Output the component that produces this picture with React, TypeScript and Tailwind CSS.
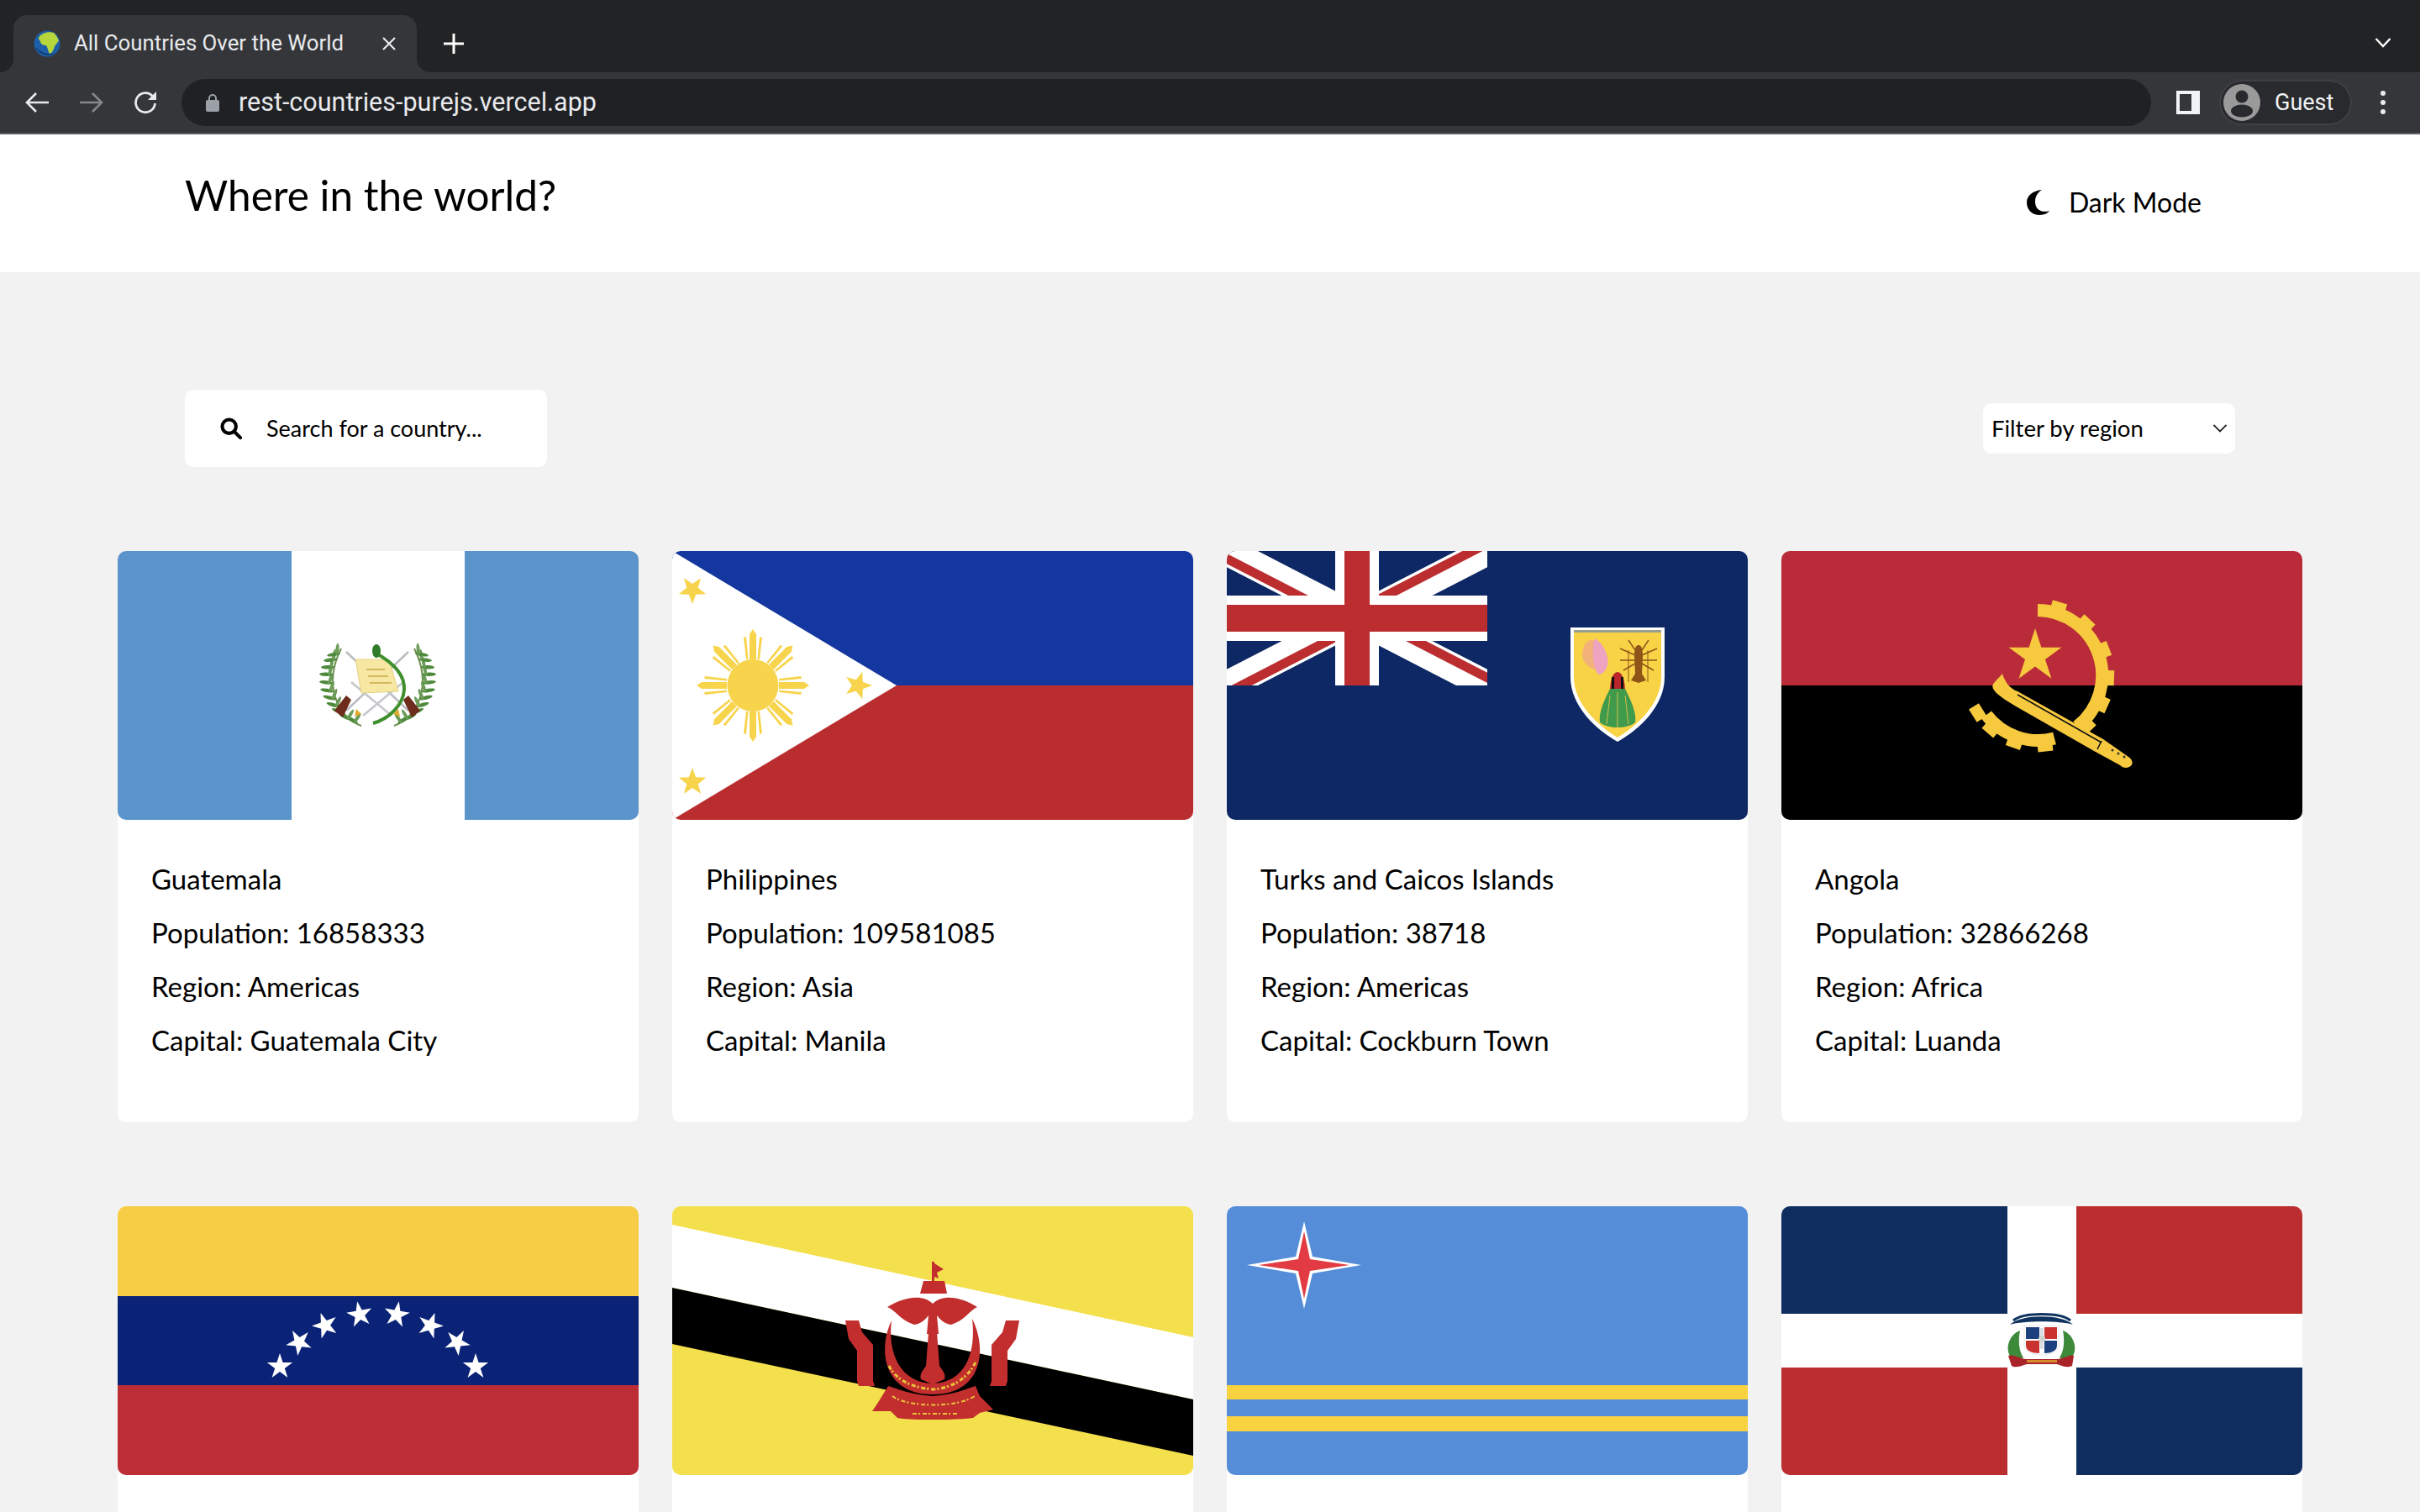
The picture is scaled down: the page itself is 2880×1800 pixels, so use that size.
import React from "react";

type Country = {
  name: string;
  population?: string;
  region?: string;
  capital?: string;
  Flag: () => React.ReactElement;
};

const starPoints = (cx: number, cy: number, r: number, rot = 0, inner = 0.382) => {
  const pts: string[] = [];
  for (let i = 0; i < 10; i++) {
    const rad = i % 2 === 0 ? r : r * inner;
    const a = ((-90 + rot + i * 36) * Math.PI) / 180;
    pts.push(`${(cx + rad * Math.cos(a)).toFixed(1)},${(cy + rad * Math.sin(a)).toFixed(1)}`);
  }
  return pts.join(" ");
};

const FlagSvg = ({ children }: { children: React.ReactNode }) => (
  <svg viewBox="0 0 620 320" className="block w-full h-full" aria-hidden="true">
    {children}
  </svg>
);

// leaves along a branch, used by the guatemala wreath
const Wreath = ({ flip }: { flip?: boolean }) => {
  const pts = [
    [284, 204], [276, 200], [268, 193], [262, 185], [258, 176], [255, 167], [254, 157],
    [254, 147], [256, 138], [259, 129], [263, 122],
  ];
  return (
    <g transform={flip ? "translate(619 0) scale(-1 1)" : undefined}>
      <path d="M290 208C262 198 244 160 266 116" fill="none" stroke="#6f8f4f" strokeWidth="2" />
      {pts.map(([x, y], i) => (
        <g key={i}>
          <ellipse cx={x - 6} cy={y} rx="8" ry="2.2" fill="#4f8a3c" transform={`rotate(${30 - i * 4} ${x} ${y})`} />
          <ellipse cx={x + 5} cy={y - 2} rx="7" ry="2" fill="#6b9c58" transform={`rotate(${-55 - i * 3} ${x} ${y})`} />
        </g>
      ))}
    </g>
  );
};

const Guatemala = () => (
  <FlagSvg>
    <rect width="620" height="320" fill="#fff" />
    <rect width="207" height="320" fill="#5b94cb" />
    <rect x="413" width="207" height="320" fill="#5b94cb" />
    <Wreath />
    <Wreath flip />
    <path d="M272 190L346 120M346 190L272 120" stroke="#b9bdc2" strokeWidth="2.500" />
    <path d="M278 156L326 196M340 156L292 196" stroke="#c3c6ca" strokeWidth="2.500" />
    <path d="M258 190L272 172L278 177L268 198ZM360 190L346 172L340 177L350 198Z" fill="#6e2c1c" />
    <path d="M283 129H323L334 167L290 169Z" fill="#f6e7a3" stroke="#e6d184" strokeWidth="1" />
    <path d="M296 141H318M298 149H322M300 157H326" stroke="#c9a94a" strokeWidth="1.500" />
    <path d="M308 122C326 132 342 146 341 165C340 184 322 200 304 205" fill="none" stroke="#3f8f2f" strokeWidth="4" />
    <ellipse cx="308" cy="119" rx="5" ry="8" fill="#2f7d2c" />
    <path d="M284 188l6 6-8 3zM334 188l-6 6 8 3z" fill="#e3a92a" />
  </FlagSvg>
);

const SunRay = ({ angle }: { angle: number }) => (
  <g transform={`rotate(${angle} 96 160)`}>
    <polygon points="92,129 92,99 96,93 100,99 100,129" fill="#f7d44c" />
    <polygon points="88,129 85,103 88,102 90.500,129" fill="#f7d44c" />
    <polygon points="101.500,129 104,102 107,103 104,129" fill="#f7d44c" />
  </g>
);

const Philippines = () => (
  <FlagSvg>
    <rect width="620" height="160" fill="#14379f" />
    <rect y="160" width="620" height="160" fill="#b92d2e" />
    <polygon points="0,0 267,160 0,320" fill="#fff" />
    <ellipse cx="96" cy="160" rx="30.500" ry="31" fill="#f7d44c" />
    {[0, 45, 90, 135, 180, 225, 270, 315].map((a) => (
      <SunRay key={a} angle={a} />
    ))}
    <polygon points={starPoints(24, 46, 17, 180, 0.42)} fill="#f7d44c" />
    <polygon points={starPoints(221, 160, 17, 90, 0.42)} fill="#f7d44c" />
    <polygon points={starPoints(24, 275, 17, 0, 0.42)} fill="#f7d44c" />
  </FlagSvg>
);

const Turks = () => (
  <FlagSvg>
    <defs>
      <clipPath id="union">
        <rect width="310" height="160" />
      </clipPath>
    </defs>
    <rect width="620" height="320" fill="#0d2864" />
    <g clipPath="url(#union)">
      <path d="M0 0L310 160M0 160L310 0" stroke="#fff" strokeWidth="34" />
      <path
        d="M-4 7L151 87M159 73L314 153M151 73L306 -7M159 87L4 167"
        stroke="#bb2d2f"
        strokeWidth="11"
      />
    </g>
    <rect x="129" width="52" height="160" fill="#fff" />
    <rect y="53" width="310" height="54" fill="#fff" />
    <rect x="140" width="30" height="160" fill="#bb2d2f" />
    <rect y="64" width="310" height="32" fill="#bb2d2f" />
    <path d="M409 91H521V150C521 185 490 213 465 227C440 213 409 185 409 150Z" fill="#fff" />
    <path d="M413 96H517V150C517 182 488 208 465 222C442 208 413 182 413 150Z" fill="#f7d345" />
    <rect x="413" y="94" width="104" height="3" fill="#9aa08f" />
    <path d="M423 124C423 112 430 104 436 106C442 110 448 125 440 142C432 140 424 134 423 124Z" fill="#f2b27a" />
    <path d="M438 104C446 108 456 124 453 136C450 146 444 148 441 146C435 134 434 114 438 104Z" fill="#eea3c0" />
    <path d="M490 112C494 112 495 118 495 126L494 146L499 154L490 157L481 154L486 146L485 126C485 118 486 112 490 112Z" fill="#8f5518" />
    <path d="M478 106L486 118M502 106L494 118M468 116L486 124M512 116L494 124M468 130L486 130M512 130L494 130M472 142L486 134M508 142L494 134" stroke="#8f5518" strokeWidth="1.500" />
    <path d="M478 118V156M501 118V156" stroke="#8f5518" strokeWidth="1" />
    <path d="M456 168C456 152 460 144 465 144C470 144 474 152 474 168Z" fill="#b8252b" />
    <rect x="458" y="150" width="3" height="14" fill="#111" />
    <rect x="469" y="150" width="3" height="14" fill="#111" />
    <path d="M456 164H474C480 176 488 192 486 204C476 212 454 212 444 204C442 192 450 176 456 164Z" fill="#3f9a4b" />
    <path d="M456 172L452 206M465 168V210M474 172L478 206" stroke="#d6c048" strokeWidth="1" />
  </FlagSvg>
);

const GearTooth = ({ angle }: { angle: number }) => (
  <rect x="296" y="57" width="18" height="14" fill="#f6c93f" transform={`rotate(${angle} 305 148)`} />
);

const Angola = () => (
  <FlagSvg>
    <rect width="620" height="160" fill="#ba2b39" />
    <rect y="160" width="620" height="160" fill="#000" />
    <path d="M305 70.500A77.500 77.500 0 0 1 352 209" fill="none" stroke="#f6c93f" strokeWidth="15" />
    <path d="M244 195A77.500 77.500 0 0 0 325 223" fill="none" stroke="#f6c93f" strokeWidth="15" />
    {[17, 43, 69, 92, 114, 136, 174, 199, 221, 238].map((a) => (
      <GearTooth key={a} angle={a} />
    ))}
    <polygon points={starPoints(302, 125, 33)} fill="#f6c93f" />
    <path
      d="M263 146C266 156 272 164 281 167L383 224L413 245C419 249 419 255 414 257C410 259 406 258 403 255L372 238L288 190C260 174 245 164 254 156C256 153 260 150 263 146Z"
      fill="#f6c93f"
    />
    <path d="M281 171L381 228" stroke="#111" strokeWidth="1.500" fill="none" />
    <path d="M381 226L376 236" stroke="#111" strokeWidth="1.500" />
    <circle cx="394" cy="237" r="1.500" fill="#333" />
    <circle cx="401" cy="241" r="1.500" fill="#333" />
    <circle cx="408" cy="245" r="1.500" fill="#333" />
  </FlagSvg>
);

const Venezuela = () => (
  <FlagSvg>
    <rect width="620" height="107" fill="#f8cd46" />
    <rect y="107" width="620" height="107" fill="#0a2377" />
    <rect y="213" width="620" height="107" fill="#bd2d35" />
    {[
      [193, 191, 0], [216, 162, -30], [247, 142, -20], [288, 129, -10],
      [332, 129, 10], [372, 142, 20], [404, 162, 30], [426, 191, 0],
    ].map(([x, y, r]) => (
      <polygon key={x} points={starPoints(x, y, 16, r)} fill="#fff" />
    ))}
  </FlagSvg>
);

const Brunei = () => (
  <FlagSvg>
    <rect width="620" height="320" fill="#f4e04d" />
    <polygon points="0,22 620,156 620,230 0,97" fill="#fff" />
    <polygon points="0,97 620,230 620,297 0,164" fill="#000" />
    <path d="M309 66H312V96H309Z" fill="#c22e2e" />
    <path d="M312 68L323 75L315 79L317 86L312 84Z" fill="#c22e2e" />
    <path d="M299 89H324L327 104H295Z" fill="#c22e2e" />
    <path
      d="M310 116C298 104 276 108 256 120C266 124 272 136 288 141C296 140 302 134 305 130L303 152H317L315 130C318 134 324 140 332 141C348 136 354 124 363 120C344 108 322 104 310 116Z"
      fill="#c22e2e"
    />
    <path d="M305 150H315L318 190C322 196 326 200 324 206L310 212L296 206C294 200 298 196 302 190Z" fill="#c22e2e" />
    <path d="M261 136C244 172 252 224 310 224C368 224 376 172 357 134C362 176 348 210 310 211C272 210 256 176 261 136Z" fill="#c22e2e" />
    <path d="M206 136H222L226 150L239 165V208L241 214H222L220 208V172L210 158Z" fill="#c22e2e" />
    <path d="M413 136H397L393 150L380 165V208L378 214H397L399 208V172L409 158Z" fill="#c22e2e" />
    <path
      d="M257 214C266 216 280 224 310 226C340 224 352 216 361 214L366 226L382 242L366 246L358 252C340 254 322 254 310 254C294 254 280 254 268 252L260 244L238 244L246 232Z"
      fill="#c22e2e"
    />
    <path d="M258 190C266 206 284 216 310 218C336 216 352 204 362 184" fill="none" stroke="#e9c53a" strokeWidth="3" strokeDasharray="5 2 2 3" />
    <path d="M262 226C280 240 340 240 360 226M286 247H340" fill="none" stroke="#e9c53a" strokeWidth="2" strokeDasharray="5 2 2 3" />
  </FlagSvg>
);

const Aruba = () => (
  <FlagSvg>
    <rect width="620" height="320" fill="#558dd9" />
    <rect y="213" width="620" height="17" fill="#f9d23f" />
    <rect y="250" width="620" height="18" fill="#f9d23f" />
    <polygon points="92,18 102,60 160,70 102,80 92,122 82,80 24,70 82,60" fill="#fff" />
    <polygon points="92,30 99,63 146,70 99,77 92,110 85,77 38,70 85,63" fill="#e33b44" />
  </FlagSvg>
);

const Dominican = () => (
  <FlagSvg>
    <rect width="620" height="320" fill="#fff" />
    <rect width="269" height="128" fill="#0f2d5f" />
    <rect x="351" width="269" height="128" fill="#bb2e2f" />
    <rect y="192" width="269" height="128" fill="#bb2e2f" />
    <rect x="351" y="192" width="269" height="128" fill="#0f2d5f" />
    <path d="M272 141C285 128 334 128 347 141C332 136 288 136 272 141Z" fill="#10335f" />
    <path d="M276 136C288 126 332 126 344 136" fill="none" stroke="#10335f" strokeWidth="3" />
    <path d="M289 142H330V166C330 172 322 177 310 177C298 177 289 172 289 166Z" fill="#fff" stroke="#e6e6e6" strokeWidth="1" />
    <rect x="291" y="144" width="16" height="14" fill="#1c3f7d" />
    <rect x="313" y="144" width="15" height="14" fill="#c9322f" />
    <path d="M291 160H307V175C298 175 291 172 291 166Z" fill="#c9322f" />
    <path d="M313 160H328V166C328 172 321 175 313 175Z" fill="#1c3f7d" />
    <path d="M308 145H312V170H308Z" fill="#d9dde2" />
    <circle cx="310" cy="158" r="4" fill="#cfd6d0" />
    <path d="M284 148C272 152 266 168 272 178C276 184 282 184 288 180C282 172 282 158 284 148Z" fill="#3c8a3a" />
    <path d="M335 148C347 152 353 168 347 178C343 184 337 184 331 180C337 172 337 158 335 148Z" fill="#3c8a3a" />
    <path d="M270 178C278 176 284 182 292 182H328C336 182 342 176 348 178L346 190C340 193 334 190 328 188H292C286 190 278 193 274 190Z" fill="#a82428" />
    <rect x="292" y="183" width="36" height="3" fill="#d68b2e" />
  </FlagSvg>
);

const COUNTRIES: Country[] = [
  { name: "Guatemala", population: "16858333", region: "Americas", capital: "Guatemala City", Flag: Guatemala },
  { name: "Philippines", population: "109581085", region: "Asia", capital: "Manila", Flag: Philippines },
  { name: "Turks and Caicos Islands", population: "38718", region: "Americas", capital: "Cockburn Town", Flag: Turks },
  { name: "Angola", population: "32866268", region: "Africa", capital: "Luanda", Flag: Angola },
  { name: "Venezuela", Flag: Venezuela },
  { name: "Brunei", Flag: Brunei },
  { name: "Aruba", Flag: Aruba },
  { name: "Dominican Republic", Flag: Dominican },
];

const CountryCard = ({ country }: { country: Country }) => {
  const { Flag } = country;
  return (
    <div className="h-[680px] rounded-[10px] bg-white" aria-label={country.name}>
      <div className="h-[320px] overflow-hidden rounded-[10px]">
        <Flag />
      </div>
      {country.population && (
        <div className="flex flex-col gap-[20px] pl-[40px] pt-[48px] text-[33px] leading-[44px] text-black">
          <p>{country.name}</p>
          <p>Population: {country.population}</p>
          <p>Region: {country.region}</p>
          <p>Capital: {country.capital}</p>
        </div>
      )}
    </div>
  );
};

const BrowserChrome = () => (
  <div className="font-['Roboto',sans-serif]">
    <div className="flex h-[86px] items-end bg-[#222325] pl-[16px]">
      <div className="relative flex h-[68px] w-[480px] items-center rounded-t-[16px] bg-[#35363a] pl-[24px] pr-[24px]">
        <div className="absolute bottom-0 -left-[16px] h-[16px] w-[16px] bg-[#35363a]">
          <div className="h-full w-full rounded-br-[16px] bg-[#222325]" />
        </div>
        <div className="absolute bottom-0 -right-[16px] h-[16px] w-[16px] bg-[#35363a]">
          <div className="h-full w-full rounded-bl-[16px] bg-[#222325]" />
        </div>
        <svg viewBox="0 0 32 32" className="h-[32px] w-[32px] shrink-0" aria-hidden="true">
          <circle cx="16" cy="16" r="15.500" fill="#1d5fa8" />
          <path d="M6 9C9 3 18 1 24 3C27 6 29 9 30 13C28 14 27 17 25 19C24 23 22 27 19 28C17 25 17 21 15 18C11 18 8 16 8 13C7 12 6 11 6 9Z" fill="#b7d63c" />
          <path d="M2 20C6 29 20 33 27 26C20 31 8 27 2 20Z" fill="#0c3566" />
        </svg>
        <span className="ml-[16px] whitespace-nowrap text-[25.800px] leading-none text-[#e8eaed]">
          All Countries Over the World
        </span>
        <svg viewBox="0 0 18 18" className="ml-auto h-[18px] w-[18px] shrink-0" aria-hidden="true">
          <path d="M2 2L16 16M16 2L2 16" stroke="#e8eaed" strokeWidth="2.200" />
        </svg>
      </div>
      <div className="mb-[22px] ml-[32px]">
        <svg viewBox="0 0 24 24" className="h-[24px] w-[24px]" aria-hidden="true">
          <path d="M12 0V24M0 12H24" stroke="#fff" strokeWidth="3" />
        </svg>
      </div>
      <div className="mb-[28px] ml-auto mr-[34px]">
        <svg viewBox="0 0 20 14" className="h-[14px] w-[20px]" aria-hidden="true">
          <path d="M1.500 2L10 11L18.500 2" fill="none" stroke="#fff" strokeWidth="2.400" />
        </svg>
      </div>
    </div>
    <div className="flex h-[74px] items-center border-b-2 border-[#5a5b5f] bg-[#35363a]">
      <svg viewBox="0 0 28 26" className="ml-[30px] h-[26px] w-[28px]" aria-hidden="true">
        <path d="M13 2L2 13L13 24M2 13H28" fill="none" stroke="#e8eaed" strokeWidth="2.600" />
      </svg>
      <svg viewBox="0 0 28 26" className="ml-[37px] h-[26px] w-[28px]" aria-hidden="true">
        <path d="M15 2L26 13L15 24M26 13H0" fill="none" stroke="#85878a" strokeWidth="2.600" />
      </svg>
      <svg viewBox="0 0 28 28" className="ml-[36px] h-[28px] w-[28px]" aria-hidden="true">
        <path d="M23 7A11.500 11.500 0 1 0 25.500 15" fill="none" stroke="#e8eaed" strokeWidth="2.800" />
        <path d="M27 1V11H17Z" fill="#e8eaed" />
      </svg>
      <div className="ml-[29px] flex h-[56px] w-[2344px] items-center rounded-full bg-[#202124] pl-[29px]">
        <svg viewBox="0 0 16 22" className="h-[22px] w-[16px]" aria-hidden="true">
          <path d="M4 9V6A4 4 0 0 1 12 6V9" fill="none" stroke="#9aa0a6" strokeWidth="2" />
          <rect y="8" width="16" height="14" rx="2" fill="#9aa0a6" />
        </svg>
        <span className="ml-[23px] text-[30.500px] leading-none text-[#e8eaed]">rest-countries-purejs.vercel.app</span>
      </div>
      <svg viewBox="0 0 28 28" className="ml-[30px] h-[28px] w-[28px]" aria-hidden="true">
        <path d="M0 0H28V28H0ZM4 4V24H18V4Z" fill="#f1f3f4" fillRule="evenodd" />
      </svg>
      <div className="ml-[23px] flex h-[54px] w-[158px] items-center rounded-full border-2 border-[#3f4044] bg-[#292a2e] pl-[3px]">
        <svg viewBox="0 0 44 44" className="h-[44px] w-[44px]" aria-hidden="true">
          <circle cx="22" cy="22" r="22" fill="#9a9a9a" />
          <circle cx="22" cy="15" r="7.500" fill="#292a2e" />
          <ellipse cx="22" cy="32" rx="13" ry="7.500" fill="#292a2e" />
        </svg>
        <span className="ml-[17px] text-[27px] leading-none text-[#f1f3f4]">Guest</span>
      </div>
      <div className="ml-[34px] flex flex-col gap-[5px]">
        <span className="h-[6px] w-[6px] rounded-full bg-[#e8eaed]" />
        <span className="h-[6px] w-[6px] rounded-full bg-[#e8eaed]" />
        <span className="h-[6px] w-[6px] rounded-full bg-[#e8eaed]" />
      </div>
    </div>
  </div>
);

export default function App() {
  return (
    <div className="h-screen overflow-hidden bg-[#f2f2f2] font-['Lato',sans-serif] text-black">
      <BrowserChrome />
      <header className="flex h-[164px] justify-between bg-white pl-[220px] pr-[260px]">
        <h1 className="pt-[40px] text-[49.500px] leading-[64px] font-normal">Where in the world?</h1>
        <button className="flex h-[162px] items-center gap-[22px] text-[32px]">
          <svg viewBox="0 0 28 30" className="h-[30px] w-[28px]" aria-hidden="true">
            <path d="M18 0C7 1 0 7 0 15C0 24 7 30 15 30C20 30 25 28 27 25C17 28 10 23 10 14C10 8 13 3 18 0Z" fill="#000" />
          </svg>
          Dark Mode
        </button>
      </header>
      <section className="mt-[140px] flex items-center justify-between pl-[220px] pr-[220px]">
        <div className="flex h-[92px] w-[431px] items-center rounded-[10px] bg-white pl-[42px]">
          <svg viewBox="0 0 28 28" className="h-[26px] w-[26px]" aria-hidden="true">
            <circle cx="11.500" cy="11.500" r="8.800" fill="none" stroke="#000" strokeWidth="4.400" />
            <path d="M18 18L26 26" stroke="#000" strokeWidth="4.400" strokeLinecap="round" />
          </svg>
          <input
            className="ml-[29px] w-[320px] bg-transparent text-[27px] text-black outline-none placeholder:text-black"
            placeholder="Search for a country..."
          />
        </div>
        <div className="flex h-[60px] w-[300px] items-center justify-between rounded-[10px] bg-white pl-[10px] pr-[9px] text-[27.500px]">
          Filter by region
          <svg viewBox="0 0 18 12" className="h-[12px] w-[18px]" aria-hidden="true">
            <path d="M1.500 2L9 9.500L16.500 2" fill="none" stroke="#222" strokeWidth="1.800" />
          </svg>
        </div>
      </section>
      <main className="mt-[100px] grid grid-cols-4 gap-x-[40px] gap-y-[100px] px-[140px]">
        {COUNTRIES.map((c) => (
          <CountryCard key={c.name} country={c} />
        ))}
      </main>
    </div>
  );
}
